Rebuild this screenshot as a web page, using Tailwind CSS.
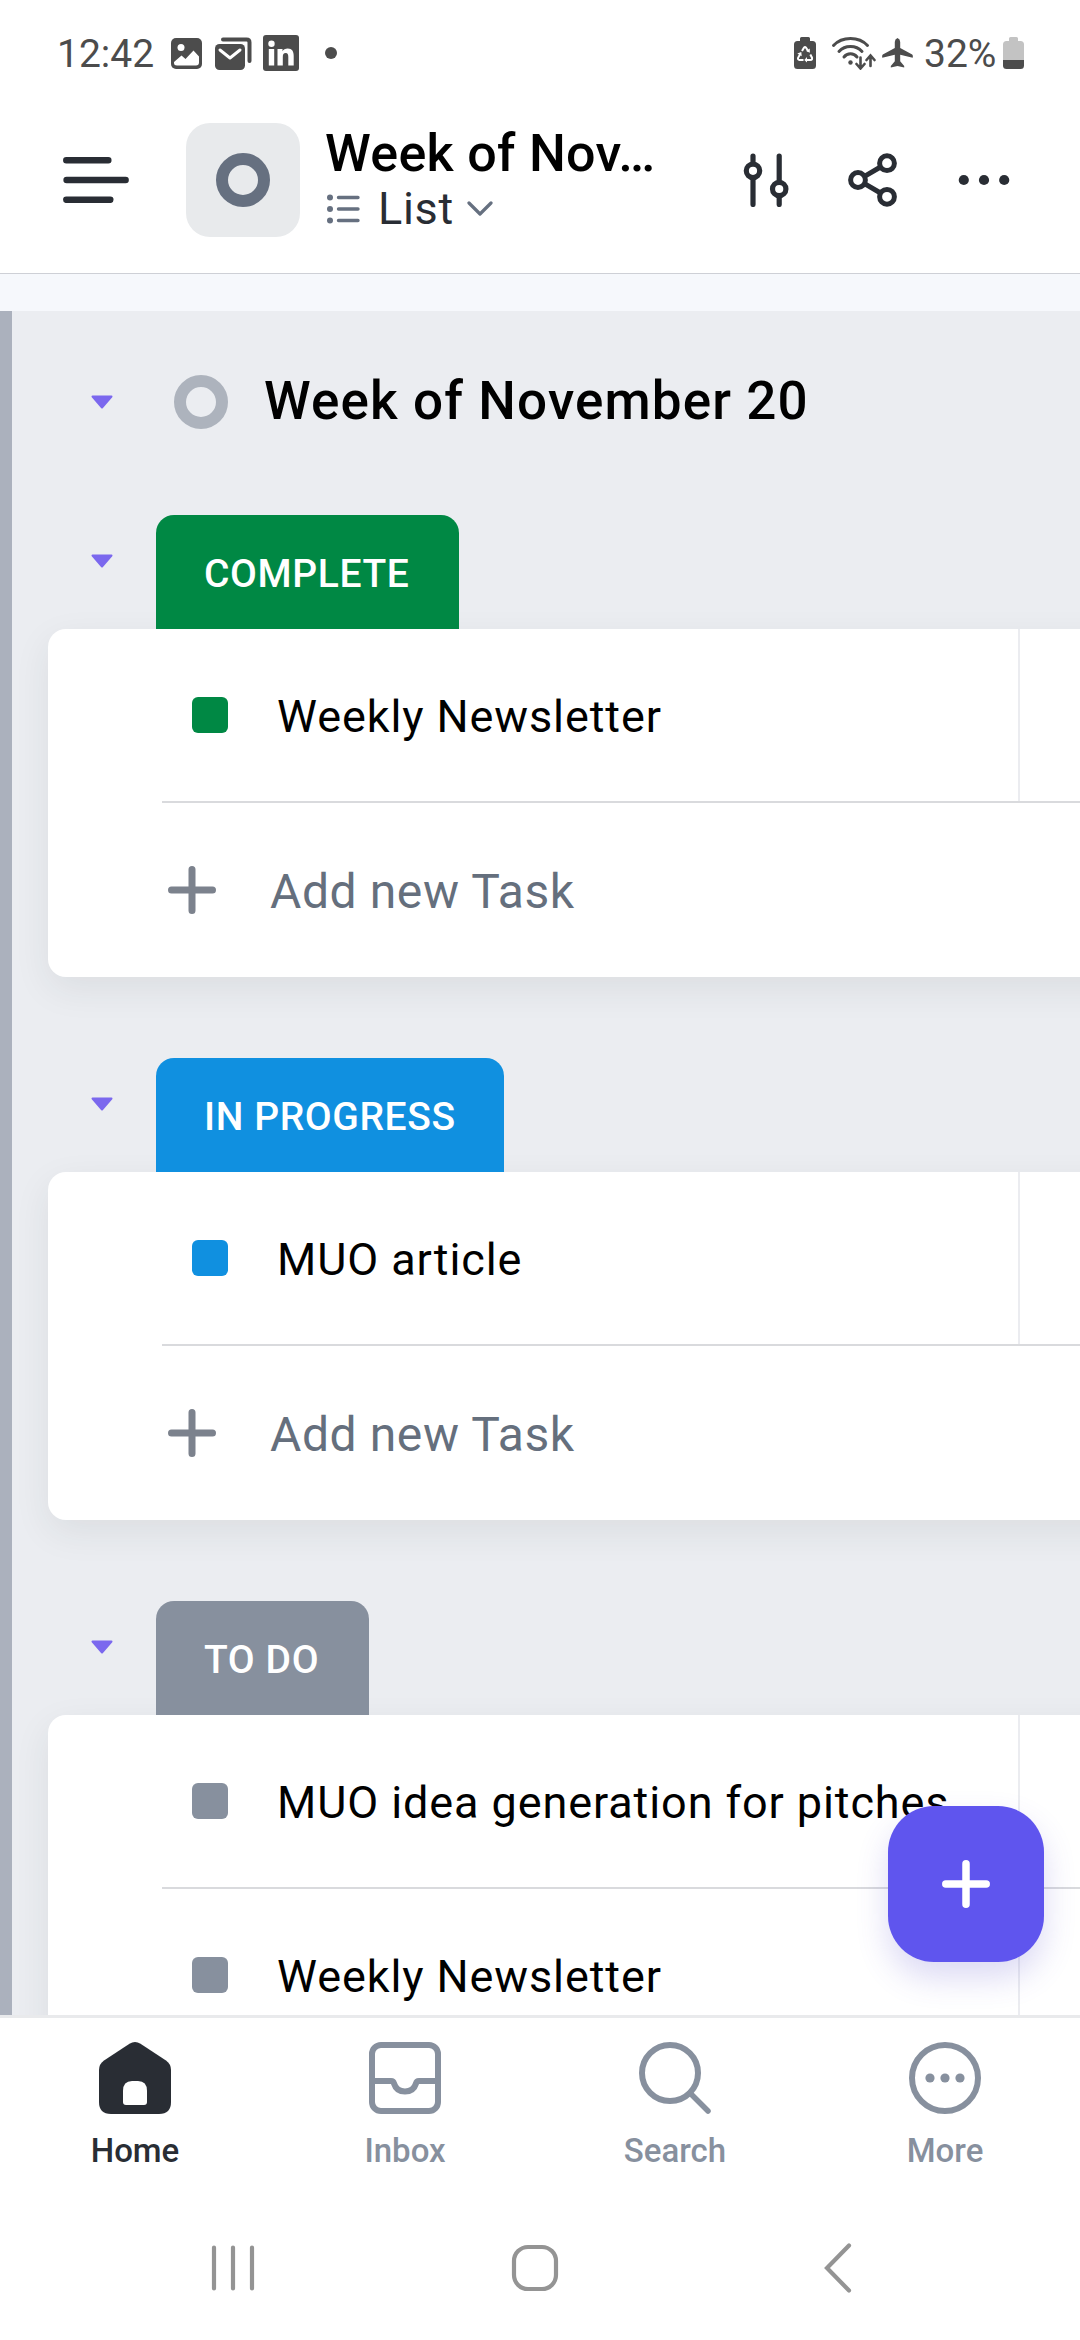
<!DOCTYPE html>
<html lang="en">
<head>
    <meta charset="UTF-8">
    <meta name="viewport" content="width=device-width, initial-scale=1.0">
    <title>Week of November 20</title>
    <script src="https://cdn.jsdelivr.net/npm/@tailwindcss/browser@4"></script>
    <style>
        body {
            font-family: Roboto, 'Liberation Sans', sans-serif;
        }
    </style>
</head>
<body class="bg-white w-[1080px] h-[2340px] overflow-hidden flex flex-col">

    <!-- Status bar -->
    <div class="h-[86px] pt-5 pl-[57px] pr-[56px] flex items-center text-[#4c4c4c] shrink-0">
        <span class="text-[39px] leading-none w-[114px] pt-[2px]">12:42</span>
        <svg class="w-[31px] h-[31px]" viewBox="0 0 31 31">
            <rect width="31" height="31" rx="5" fill="#4c4c4c"/>
            <circle cx="10" cy="9.500" r="3.500" fill="#fff"/>
            <path d="M3 24l7.500-6.500 4 3.500 8-8.500 5.500 6v6q0 3-3 3H6q-3 0-3-2.500z" fill="#fff"/>
        </svg>
        <svg class="w-[37px] h-[33px] ml-[13px]" viewBox="0 0 37 33">
            <path d="M8 2.500h23.500q3 0 3 3V24" fill="none" stroke="#4c4c4c" stroke-width="4" stroke-linecap="round"/>
            <rect y="7" width="30" height="26" rx="4.500" fill="#4c4c4c"/>
            <path d="M5 13l10 8 10-8" fill="none" stroke="#fff" stroke-width="3" stroke-linecap="round" stroke-linejoin="round"/>
        </svg>
        <svg class="w-[36px] h-[36px] ml-[11px]" viewBox="0 0 36 36">
            <rect width="36" height="36" rx="3" fill="#4c4c4c"/>
            <circle cx="8.500" cy="8.800" r="3.200" fill="#fff"/>
            <path d="M5.800 14h5.400v16.500H5.800zM14.500 14h5v2.300c1-1.700 2.800-2.700 5.200-2.700 4.600 0 6 3 6 7.400v9.500h-5.400v-8.500c0-2.200-.4-4-2.600-4s-2.900 1.700-2.900 3.900v8.600h-5.300z" fill="#fff"/>
        </svg>
        <span class="w-3 h-3 rounded-full bg-[#4c4c4c] ml-[26px]"></span>

        <svg class="w-[22px] h-[32px] ml-auto" viewBox="0 0 22 32">
            <path d="M6 4V1.500Q6 0 7.500 0h7Q16 0 16 1.500V4h2.500Q22 4 22 7.500v21q0 3.500-3.500 3.500h-15Q0 32 0 28.500v-21Q0 4 3.500 4z" fill="#4c4c4c"/>
            <g fill="none" stroke="#fff" stroke-width="2">
                <path d="M8 14l2-3.300q1-1.200 2 0l2.300 3.600"/>
                <path d="M16.300 17.500l1.700 3.200q.5 2.300-1.500 2.300H12"/>
                <path d="M9.500 23H5.500q-2-.300-1.400-2.200l2.400-4.300"/>
            </g>
            <path d="M15.800 11.500v4.200l-3.700-1.600zM13 20v5.500L10.300 23zM3.300 16.600l4-1.600.4 4.200z" fill="#fff"/>
        </svg>
        <svg class="w-[45px] h-[34px] ml-[15px]" viewBox="0 0 45 34" fill="none" stroke="#4c4c4c" stroke-linecap="round">
            <path d="M2.500 9.500Q9 2.500 19.500 2.500T36.500 9.500" stroke-width="3"/>
            <path d="M8 15.500q4.500-5 11.500-5t11.500 5" stroke-width="3"/>
            <path d="M13 21q2.500-3.200 6.500-3.200t6.500 3.200" stroke-width="3"/>
            <circle cx="19.500" cy="26.500" r="2.200" fill="#4c4c4c" stroke="none"/>
            <path d="M29.500 21.500v10.500m-4-4l4 4.500 4-4.500M39.500 30V20m-4 4l4-4.500 4 4.500" stroke-width="2.600"/>
        </svg>
        <svg class="w-[31px] h-[30px] ml-[6px]" viewBox="0 0 31 30">
            <path d="M15.500 0q2.700 1 2.700 4v6l12 6.500q1 1 .5 3.200l-12.500-3v6.500l4 4.800v1.500l-6.700-1.500-6.700 1.500v-1.500l4-4.800v-6.500l-12.500 3q-.5-2.200.5-3.200l12-6.500V4q0-3 2.700-4z" fill="#4c4c4c"/>
        </svg>
        <span class="text-[39px] leading-none ml-[11px] w-[79px] pt-[2px]">32%</span>
        <svg class="w-[21px] h-[32px]" viewBox="0 0 21 32">
            <path d="M6 4V1.500Q6 0 7.500 0h6Q15 0 15 1.500V4h2.500Q21 4 21 7.500V23H0V7.500Q0 4 3.500 4z" fill="#c3c3c3"/>
            <path d="M0 23h21v5.500q0 3.500-3.500 3.500h-14Q0 32 0 28.500z" fill="#4c4c4c"/>
        </svg>
    </div>

    <!-- App header -->
    <header class="h-[188px] border-b border-[#ced0d6] flex items-center shrink-0 pl-[63px]">
        <svg class="w-[66px] h-[46px]" viewBox="0 0 66 46" stroke="#292d34" stroke-width="6.500" stroke-linecap="round">
            <path d="M3.300 3.300h42M3.600 23h59M3.300 42.800h44"/>
        </svg>
        <div class="w-[114px] h-[114px] ml-[57px] rounded-[24px] bg-[#e8eaec] flex items-center justify-center">
            <span class="w-[54px] h-[54px] rounded-full border-[12px] border-[#667080]"></span>
        </div>
        <div class="ml-[25px] w-[350px] h-[114px] flex flex-col">
            <h1 class="text-[52px] leading-[61px] tracking-[0.3px] font-medium text-black whitespace-nowrap">Week of Nov…</h1>
            <div class="flex items-center h-[50px]">
                <svg class="w-[34px] h-[30px] ml-[2px]" viewBox="0 0 34 30">
                    <g fill="#667080"><circle cx="3" cy="3.500" r="3"/><circle cx="3" cy="15" r="3"/><circle cx="3" cy="26.500" r="3"/></g>
                    <path d="M11.500 3.500h19.500M11.500 15h19.500M11.500 26.500h19.500" stroke="#667080" stroke-width="3.400" stroke-linecap="round"/>
                </svg>
                <span class="text-[45px] leading-none tracking-[0.7px] text-[#292d34] ml-[17px]">List</span>
                <svg class="w-[26px] h-[15px] ml-[13px]" viewBox="0 0 26 15" fill="none" stroke="#667080" stroke-width="3.200" stroke-linecap="round" stroke-linejoin="round">
                    <path d="M2 2l11 11L24 2"/>
                </svg>
            </div>
        </div>
        <svg class="w-[46px] h-[54px] ml-[68px]" viewBox="0 0 46 54" fill="none" stroke="#292d34" stroke-width="5.200" stroke-linecap="round">
            <path d="M10 3v7.500M10 26v25.500M36.200 3v25.500M36.200 44v7.500"/>
            <circle cx="10" cy="17.800" r="6.700"/>
            <circle cx="36.200" cy="36" r="6.700"/>
        </svg>
        <svg class="w-[50px] h-[54px] ml-[58px]" viewBox="0 0 50 54" fill="none" stroke="#292d34" stroke-width="5">
            <circle cx="11" cy="27" r="7.400"/>
            <circle cx="40" cy="10.200" r="7.400"/>
            <circle cx="40" cy="43.800" r="7.400"/>
            <path d="M17.500 23.300l16-9.300M17.500 30.700l16 9.300"/>
        </svg>
        <svg class="w-[52px] h-[12px] ml-[61px]" viewBox="0 0 52 12" fill="#292d34">
            <circle cx="5.800" cy="6" r="5.100"/><circle cx="26" cy="6" r="5.100"/><circle cx="46.200" cy="6" r="5.100"/>
        </svg>
    </header>
    <div class="h-[37px] bg-[#f6f8fc] shrink-0"></div>

    <!-- Task list -->
    <main class="h-[1704px] bg-[#ebedf1] flex overflow-hidden shrink-0">
        <div class="w-3 bg-[#abb1bd] shrink-0"></div>
        <div class="flex-1 min-w-0">
            <div class="h-[182px] mb-[22px] flex items-center pl-[79px]">
                <svg class="w-[22px] h-[14px]" viewBox="0 0 22 14"><path d="M1.500 1.500h19L11 12.500z" fill="#7b68ee" stroke="#7b68ee" stroke-width="2" stroke-linejoin="round"/></svg>
                <span class="w-[54px] h-[54px] rounded-full border-[12px] border-[#adb3bd] ml-[61px]"></span>
                <h2 class="text-[53px] leading-none tracking-[1.12px] font-medium text-black ml-[36px] pb-[2px]">Week of November 20</h2>
            </div>
            <div id="groups"></div>
        </div>
    </main>

    <!-- Tab bar -->
    <nav class="h-[171px] border-t-[3px] border-[#e9eaec] grid grid-cols-4 pt-6 shrink-0 text-[33px] font-medium text-[#87909e]">
        <div class="flex flex-col items-center text-[#292d34]">
            <svg class="w-[72px] h-[72px]" viewBox="0 0 72 72">
                <path d="M30.500 1.800q5.500-3.600 11 0L67 18.500q5 3.500 5 9.500v32q0 12-12 12H12Q0 72 0 60V28q0-6 5-9.500z" fill="#292d34"/>
                <path d="M24 49q0-10 9-10h6q9 0 9 10v11q0 3-3 3H27q-3 0-3-3z" fill="#fff"/>
            </svg>
            <span class="mt-[17px] leading-[40px]">Home</span>
        </div>
        <div class="flex flex-col items-center">
            <svg class="w-[72px] h-[72px]" viewBox="0 0 72 72" fill="none" stroke="#87909e" stroke-width="6">
                <rect x="3" y="3" width="66" height="66" rx="9"/>
                <path d="M6 39h16q2.500 0 3 2.500 2.500 8 11 8t11-8q.5-2.500 3-2.500h16"/>
            </svg>
            <span class="mt-[17px] leading-[40px]">Inbox</span>
        </div>
        <div class="flex flex-col items-center">
            <svg class="w-[72px] h-[72px]" viewBox="0 0 72 72" fill="none" stroke="#87909e" stroke-width="6" stroke-linecap="round">
                <circle cx="31" cy="31" r="28"/>
                <path d="M51 51l18 18" stroke-width="5.500"/>
            </svg>
            <span class="mt-[17px] leading-[40px]">Search</span>
        </div>
        <div class="flex flex-col items-center">
            <svg class="w-[72px] h-[72px]" viewBox="0 0 72 72">
                <circle cx="36" cy="36" r="33" fill="none" stroke="#87909e" stroke-width="6"/>
                <g fill="#87909e"><circle cx="21" cy="36" r="4.600"/><circle cx="36" cy="36" r="4.600"/><circle cx="51" cy="36" r="4.600"/></g>
            </svg>
            <span class="mt-[17px] leading-[40px]">More</span>
        </div>
    </nav>

    <!-- Android navigation -->
    <div class="flex-1 flex items-start pt-[57px] pl-[211px]">
        <svg class="w-[44px] h-[50px]" viewBox="0 0 44 50" stroke="#949494" stroke-width="4.200" stroke-linecap="round"><path d="M3 4.500v41M22 4.500v41M41 4.500v41"/></svg>
        <svg class="w-[50px] h-[50px] ml-[255px]" viewBox="0 0 50 50"><rect x="4" y="4" width="42" height="42" rx="14" fill="none" stroke="#949494" stroke-width="4.200"/></svg>
        <svg class="w-[30px] h-[50px] ml-[263px]" viewBox="0 0 30 50" fill="none" stroke="#949494" stroke-width="4.200" stroke-linecap="round"><path d="M26 2.500L4 25l22 22.500"/></svg>
    </div>

    <!-- Floating add button -->
    <button class="absolute left-[888px] top-[1806px] w-[156px] h-[156px] rounded-[46px] bg-[#5f55ee] flex items-center justify-center shadow-[0_16px_32px_rgba(80,70,200,0.2)]">
        <svg class="w-[48px] h-[48px]" viewBox="0 0 48 48" stroke="#fff" stroke-width="7.500" stroke-linecap="round"><path d="M24 3.800v40.400M3.800 24h40.400"/></svg>
    </button>

    <script>
        const groups = [
            { status: 'COMPLETE', color: 'bg-[#008844]', width: 'w-[303px]', tasks: ['Weekly Newsletter'], canAdd: true },
            { status: 'IN PROGRESS', color: 'bg-[#1090e0]', width: 'w-[348px]', tasks: ['MUO article'], canAdd: true },
            { status: 'TO DO', color: 'bg-[#87909e]', width: 'w-[213px]', tasks: ['MUO idea generation for pitches', 'Weekly Newsletter'], canAdd: false },
        ];

        const addRow = `
            <div class="h-[174px] flex items-center pl-[120px]">
                <svg class="w-[48px] h-[48px]" viewBox="0 0 48 48" stroke="#7c828d" stroke-width="7" stroke-linecap="round"><path d="M24 3.500v41M3.500 24h41"/></svg>
                <span class="text-[48px] leading-none tracking-[0.6px] text-[#656f7d] ml-[54px] pt-[3px]">Add new Task</span>
            </div>
        `;

        function renderTask(task, color) {
            return `
                <div class="h-[174px] pl-[114px]">
                    <div class="h-[174px] border-b-2 border-[#d9dadd] flex items-center pl-[30px]">
                        <span class="w-9 h-9 rounded-[6px] ${color}"></span>
                        <span class="text-[45px] leading-none tracking-[0.9px] text-black whitespace-nowrap ml-[49px] pt-[2px] w-[741px]">${task}</span>
                        <span class="w-[2px] h-full bg-[#ebecf0]"></span>
                    </div>
                </div>
            `;
        }

        document.getElementById('groups').innerHTML = groups.map(group => `
            <section class="mb-[81px]">
                <div class="h-[114px] flex items-start pl-[79px]">
                    <svg class="w-[22px] h-[14px] mt-[39px]" viewBox="0 0 22 14"><path d="M1.500 1.500h19L11 12.500z" fill="#7b68ee" stroke="#7b68ee" stroke-width="2" stroke-linejoin="round"/></svg>
                    <div class="${group.color} ${group.width} h-full ml-[43px] pl-12 pt-[4px] rounded-t-[18px] flex items-center">
                        <span class="text-[39px] leading-none tracking-[0.6px] font-medium text-white whitespace-nowrap">${group.status}</span>
                    </div>
                </div>
                <div class="ml-9 -mr-20 bg-white rounded-l-[18px] shadow-[0_12px_36px_rgba(41,45,52,0.08)]">
                    ${group.tasks.map(task => renderTask(task, group.color)).join('')}
                    ${group.canAdd ? addRow : ''}
                </div>
            </section>
        `).join('');
    </script>
</body>
</html>
